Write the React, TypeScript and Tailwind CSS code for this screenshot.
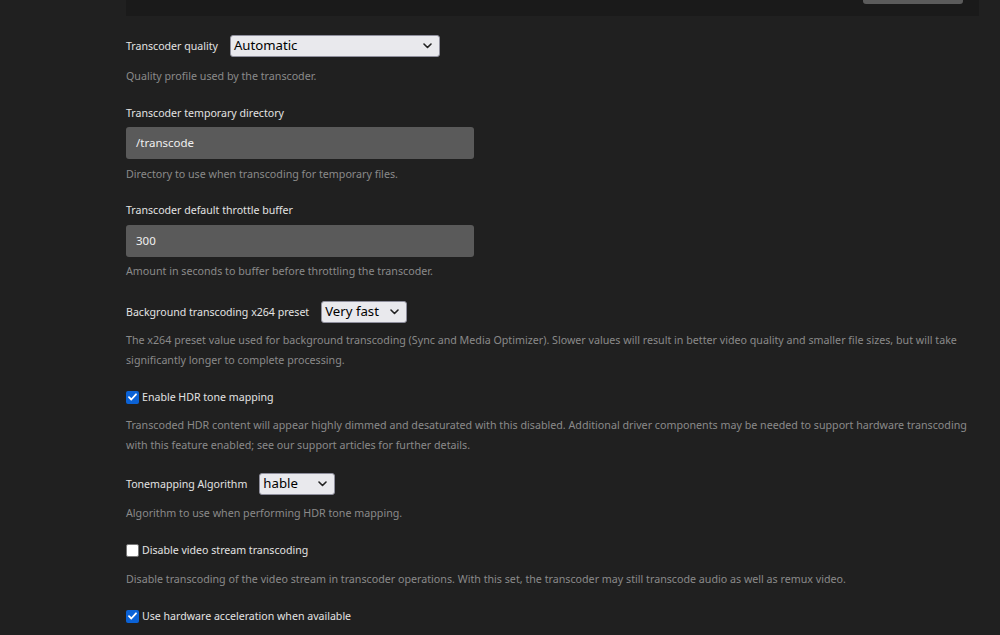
import { ReactNode } from 'react';

function Chevron() {
  return (
    <svg width="9" height="6" viewBox="0 0 9 6" className="shrink-0">
      <path d="M1 1l3.5 3.5L8 1" fill="none" stroke="#222" strokeWidth="1.6" strokeLinecap="round" strokeLinejoin="round" />
    </svg>
  );
}

function Select({ value, width }: { value: string; width: string }) {
  return (
    <div
      className={`${width} h-[22px] ml-3 flex items-center justify-between pl-[3px] pr-[7px] rounded-[3px] bg-[#e9e9ed] border border-[#8f8f9d] text-[13.2px] text-black`}
    >
      <span>{value}</span>
      <Chevron />
    </div>
  );
}

function Checkbox({ checked }: { checked: boolean }) {
  if (checked) {
    return (
      <span className="w-[13px] h-[13px] rounded-[2px] bg-[#0b62d6] flex items-center justify-center shrink-0">
        <svg width="9" height="8" viewBox="0 0 9 8">
          <path d="M1 4.2l2.3 2.3L8 1.3" fill="none" stroke="#fff" strokeWidth="1.8" strokeLinecap="round" strokeLinejoin="round" />
        </svg>
      </span>
    );
  }
  return <span className="w-[13px] h-[13px] rounded-[2px] bg-white border border-[#767676] shrink-0" />;
}

function Desc({ children, className = '' }: { children: ReactNode; className?: string }) {
  return <p className={`text-[10.7px] leading-[20px] text-[#8a8a8a] ${className}`}>{children}</p>;
}

function Label({ children, className = '' }: { children: ReactNode; className?: string }) {
  return <p className={`text-[10.6px] leading-[20px] text-[#e3e3e3] ${className}`}>{children}</p>;
}

function TextInput({ value, className = '' }: { value: string; className?: string }) {
  return (
    <div className={`w-[348px] h-[32px] rounded-[3px] bg-[#5a5a5a] flex items-center px-[10px] text-[11.5px] text-[#f0f0f0] ${className}`}>
      {value}
    </div>
  );
}

export default function App() {
  return (
    <div className="min-h-screen bg-[#202020] pl-[126px] pr-[21px] font-['Noto_Sans',sans-serif] overflow-hidden">
      {/* bottom of the previous card */}
      <div className="h-4 bg-[#1a1a1a] flex justify-end">
        <div className="w-[100px] h-[4px] mr-[16px] rounded-b-[3px] bg-[#5b5b5b]" />
      </div>

      <div className="w-[850px]">
        <div className="mt-[19px] flex items-center">
          <Label>Transcoder quality</Label>
          <Select value="Automatic" width="w-[210px]" />
        </div>
        <Desc className="mt-[9px]">Quality profile used by the transcoder.</Desc>

        <Label className="mt-[17px]">Transcoder temporary directory</Label>
        <TextInput value="/transcode" className="mt-[4px]" />
        <Desc className="mt-[5px]">Directory to use when transcoding for temporary files.</Desc>

        <Label className="mt-[16px]">Transcoder default throttle buffer</Label>
        <TextInput value="300" className="mt-[5px]" />
        <Desc className="mt-[4px]">Amount in seconds to buffer before throttling the transcoder.</Desc>

        <div className="mt-[20px] flex items-center">
          <Label>Background transcoding x264 preset</Label>
          <Select value="Very fast" width="w-[86px]" />
        </div>
        <Desc className="mt-[7px]">
          The x264 preset value used for background transcoding (Sync and Media Optimizer). Slower values will result in
          better video quality and smaller file sizes, but will take significantly longer to complete processing.
        </Desc>

        <label className="mt-[17px] flex items-center gap-[3px]">
          <Checkbox checked />
          <Label>Enable HDR tone mapping</Label>
        </label>
        <Desc className="mt-[8px]">
          Transcoded HDR content will appear highly dimmed and desaturated with this disabled. Additional driver
          components may be needed to support hardware transcoding with this feature enabled; see our support articles
          for further details.
        </Desc>

        <div className="mt-[18px] flex items-center">
          <Label>Tonemapping Algorithm</Label>
          <Select value="hable" width="w-[76px]" />
        </div>
        <Desc className="mt-[8px]">Algorithm to use when performing HDR tone mapping.</Desc>

        <label className="mt-[17px] flex items-center gap-[3px]">
          <Checkbox checked={false} />
          <Label>Disable video stream transcoding</Label>
        </label>
        <Desc className="mt-[9px]">
          Disable transcoding of the video stream in transcoder operations. With this set, the transcoder may still
          transcode audio as well as remux video.
        </Desc>

        <label className="mt-[17px] flex items-center gap-[3px]">
          <Checkbox checked />
          <Label>Use hardware acceleration when available</Label>
        </label>
      </div>
    </div>
  );
}
